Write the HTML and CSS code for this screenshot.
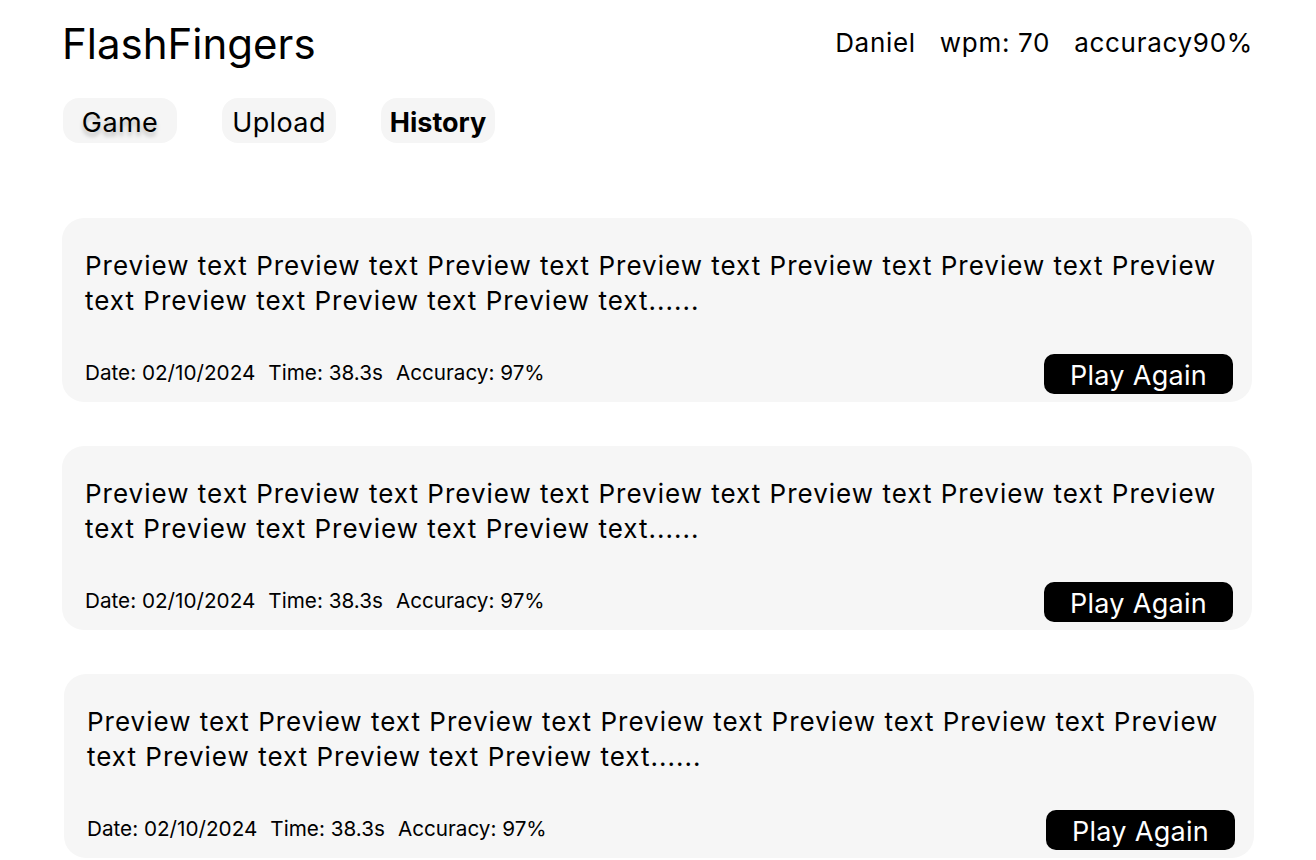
FILE: index.html
```html
<!DOCTYPE html>
<html lang="en">
<head>
<meta charset="utf-8">
<title>FlashFingers</title>
<link rel="stylesheet" href="styles.css">
</head>
<body>
<div class="page">
  <header class="topbar">
    <h1 class="brand">FlashFingers</h1>
    <div class="stats">
      <span>Daniel</span>
      <span>wpm: 70</span>
      <span>accuracy90%</span>
    </div>
  </header>
  <nav class="tabs">
    <a class="tab tab-shadow">Game</a>
    <a class="tab">Upload</a>
    <a class="tab tab-active">History</a>
  </nav>
  <main class="list">
    <section class="card">
      <p class="preview">Preview text Preview text Preview text Preview text Preview text Preview text Preview text Preview text Preview text Preview text......</p>
      <div class="card-foot">
        <div class="meta"><span>Date: 02/10/2024</span><span>Time: 38.3s</span><span>Accuracy: 97%</span></div>
        <button class="play">Play Again</button>
      </div>
    </section>
    <section class="card">
      <p class="preview">Preview text Preview text Preview text Preview text Preview text Preview text Preview text Preview text Preview text Preview text......</p>
      <div class="card-foot">
        <div class="meta"><span>Date: 02/10/2024</span><span>Time: 38.3s</span><span>Accuracy: 97%</span></div>
        <button class="play">Play Again</button>
      </div>
    </section>
    <section class="card card-shift">
      <p class="preview">Preview text Preview text Preview text Preview text Preview text Preview text Preview text Preview text Preview text Preview text......</p>
      <div class="card-foot">
        <div class="meta"><span>Date: 02/10/2024</span><span>Time: 38.3s</span><span>Accuracy: 97%</span></div>
        <button class="play">Play Again</button>
      </div>
    </section>
  </main>
</div>
</body>
</html>
```

FILE: styles.css
```css
* { box-sizing: border-box; }
html, body { margin: 0; padding: 0; background: #fff; }
body {
  font-family: Inter, "Noto Sans", "Liberation Sans", sans-serif;
  color: #000;
  overflow: hidden;
}
.page {
  padding: 18px 64px 0 62px;
}
.topbar {
  display: flex;
  justify-content: space-between;
  align-items: flex-start;
  height: 62px;
}
.brand {
  margin: 0;
  font-size: 42px;
  font-weight: 400;
  line-height: 52px;
}
.stats {
  display: flex;
  gap: 24px;
  font-size: 26px;
  letter-spacing: 0.7px;
  line-height: 50px;
  margin-right: -1px;
}
.tabs {
  display: flex;
  gap: 45px;
  margin-top: 18px;
  margin-left: 1px;
}
.tab {
  width: 114px;
  height: 45px;
  display: flex;
  align-items: center;
  justify-content: center;
  padding-top: 3px;
  background: #f5f5f5;
  border-radius: 16px;
  font-size: 27px;
  letter-spacing: 0.4px;
}
.tab-shadow { text-shadow: 0 4px 4px rgba(0,0,0,0.25); }
.tab-active { font-weight: 700; letter-spacing: 0; }
.list {
  margin-top: 75px;
  display: flex;
  flex-direction: column;
  gap: 44px;
}
.card {
  width: 1190px;
  height: 184px;
  background: #f6f6f6;
  border-radius: 22px;
  padding: 30px 19px 8px 23px;
  display: flex;
  flex-direction: column;
  justify-content: space-between;
}
.card-shift { margin-left: 2px; }
.preview {
  margin: 0;
  font-size: 26px;
  letter-spacing: 1px;
  line-height: 35px;
}
.card-foot {
  display: flex;
  justify-content: space-between;
  align-items: flex-end;
}
.meta {
  display: flex;
  gap: 13px;
  font-size: 20.7px;
  line-height: 28px;
  margin-bottom: 7px;
}
.play {
  width: 189px;
  height: 40px;
  background: #000;
  color: #fff;
  border: none;
  border-radius: 10px;
  font-family: inherit;
  font-size: 27px;
  letter-spacing: 0.3px;
  padding: 3px 0 0;
  line-height: 37px;
}
```
